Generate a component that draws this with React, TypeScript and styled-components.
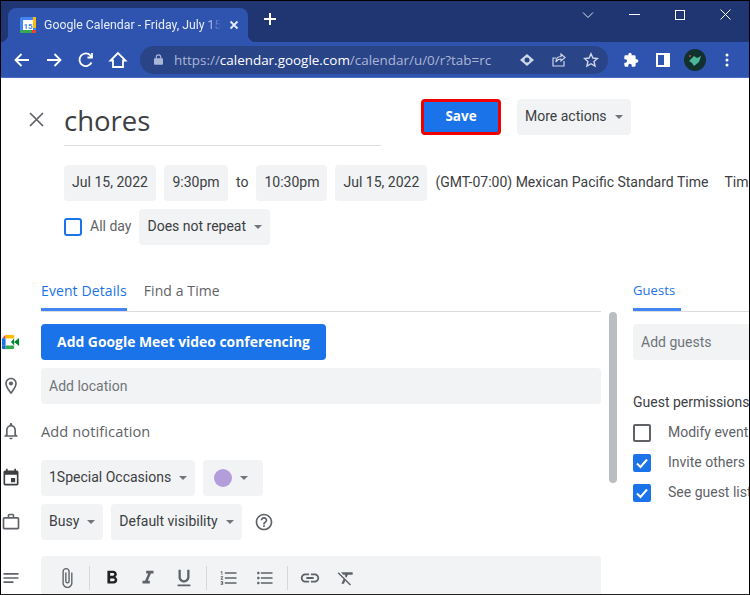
import React from 'react';
import styled, { createGlobalStyle } from 'styled-components';
import {
  MdAttachFile,
  MdEvent,
  MdFormatBold,
  MdFormatClear,
  MdFormatItalic,
  MdFormatListBulleted,
  MdFormatListNumbered,
  MdFormatUnderlined,
  MdHelpOutline,
  MdLink,
  MdNotes,
  MdOutlineLocationOn,
  MdOutlineNotifications,
  MdOutlineWorkOutline,
} from 'react-icons/md';

const GlobalStyle = createGlobalStyle`
  html, body {
    margin: 0;
    padding: 0;
    background: #fff;
  }
`;

const Frame = styled.div`
  width: 750px;
  height: 595px;
  box-sizing: border-box;
  border-top: 1px solid #000;
  border-left: 1px solid #000;
  border-right: 1px solid #000;
  border-bottom: 1px solid #222;
  overflow: hidden;
  display: flex;
  flex-direction: column;
  font-family: Roboto, 'Liberation Sans', sans-serif;
  font-size: 14px;
  color: #3c4043;
  background: #fff;
`;

const TitleBar = styled.div`
  height: 41px;
  flex: none;
  background: #1f3673;
  display: flex;
  align-items: flex-end;
  padding-left: 7px;
`;

const Tab = styled.div`
  width: 240px;
  height: 34px;
  box-sizing: border-box;
  background: #2f54b0;
  border-radius: 8px 8px 0 0;
  display: flex;
  align-items: center;
  padding: 0 9px 0 12px;
  gap: 8px;
  color: #e6ecf8;
  font-size: 12.3px;
  white-space: nowrap;
  position: relative;

  &::before,
  &::after {
    content: '';
    position: absolute;
    bottom: 0;
    width: 8px;
    height: 8px;
  }
  &::before {
    left: -8px;
    background: radial-gradient(circle at 0 0, transparent 8px, #2f54b0 8.5px);
  }
  &::after {
    right: -8px;
    background: radial-gradient(circle at 100% 0, transparent 8px, #2f54b0 8.5px);
  }
`;

const TabTitle = styled.span`
  flex: 1;
  overflow: hidden;
  mask-image: linear-gradient(to right, #000 162px, transparent 177px);
`;

const NewTab = styled.div`
  margin: 0 0 10px 15px;
  width: 16px;
  height: 26px;
  display: flex;
  align-items: center;
`;

const WindowButtons = styled.div`
  margin-left: auto;
  align-self: flex-start;
  display: flex;
  align-items: center;
  height: 27px;
  gap: 35px;
  padding-right: 18px;
`;

const Toolbar = styled.div`
  height: 36px;
  flex: none;
  box-sizing: border-box;
  background: #2f54b0;
  border-bottom: 1px solid #4a6cc0;
  display: flex;
  align-items: center;
  padding-left: 11px;
`;

const NavIcons = styled.div`
  width: 128px;
  display: flex;
  align-items: center;
  gap: 12px;
  flex: none;
`;

const Omnibox = styled.div`
  width: 468px;
  height: 28px;
  flex: none;
  border-radius: 14px;
  background: #2a4488;
  display: flex;
  align-items: center;
  padding: 0 9px 0 14px;
  box-sizing: border-box;
  font-family: 'Open Sans', 'Liberation Sans', sans-serif;
  font-size: 13.45px;
  color: #aab6d6;
`;

const Url = styled.span`
  margin-left: 11px;
  flex: 1;
  white-space: nowrap;
  b {
    font-weight: 400;
    color: #fff;
  }
`;

const OmniIcons = styled.div`
  display: flex;
  gap: 16px;
  align-items: center;
`;

const ExtIcons = styled.div`
  display: flex;
  align-items: center;
  margin-left: 7px;
`;

const ExtSlot = styled.span`
  width: 32px;
  display: flex;
  justify-content: center;
  align-items: center;
`;

const Page = styled.div`
  flex: 1;
  min-height: 0;
  overflow: hidden;
`;

const HeaderRow = styled.div`
  display: flex;
  align-items: flex-start;
  padding: 21px 0 0 28px;
  height: 87px;
  box-sizing: border-box;
`;

const CloseBox = styled.div`
  width: 35px;
  height: 40px;
  display: flex;
  align-items: center;
  flex: none;
`;

const TitleInput = styled.div`
  width: 317px;
  height: 47px;
  flex: none;
  box-sizing: border-box;
  border-bottom: 1px solid #dadce0;
  font-family: 'Open Sans', 'Noto Sans', sans-serif;
  font-size: 27.5px;
  line-height: 44px;
  color: #3c4043;
`;

const SaveButton = styled.div`
  width: 80px;
  height: 36px;
  margin-left: 40px;
  padding-bottom: 2px;
  box-sizing: border-box;
  border: 3px solid #f00000;
  border-radius: 4px;
  background: #1a73e8;
  color: #fff;
  font-weight: 700;
  display: flex;
  align-items: center;
  justify-content: center;
  font-family: 'Open Sans', Roboto, sans-serif;
  font-size: 13.5px;
`;

const Chip = styled.div<{ $w?: number }>`
  height: 36px;
  box-sizing: border-box;
  background: #f1f3f4;
  border-radius: 4px;
  display: flex;
  align-items: center;
  padding: 0 8px 2px;
  white-space: nowrap;
  flex: none;
  color: #3c4043;
  ${p => (p.$w ? `width: ${p.$w}px;` : '')}
`;

const MoreChip = styled(Chip)`
  margin-left: 16px;
`;

const Caret = styled.span`
  width: 0;
  height: 0;
  margin: 2px 0 0 8px;
  border-left: 4.5px solid transparent;
  border-right: 4.5px solid transparent;
  border-top: 4.5px solid #70757a;
  flex: none;
`;

const DateRow = styled.div`
  display: flex;
  align-items: center;
  height: 36px;
  padding-left: 63px;
  gap: 8px;
  white-space: nowrap;
`;

const DateChip = styled(Chip)`
  justify-content: center;
  padding: 0 0 2px;
`;

const RowText = styled.span`
  flex: none;
  margin-bottom: 2px;
`;

const Tim = styled(RowText)`
  margin-left: 8px;
`;

const AllDayRow = styled.div`
  display: flex;
  align-items: center;
  height: 36px;
  margin-top: 8px;
  padding-left: 63px;
`;

const AllDayBox = styled.span`
  width: 18px;
  height: 18px;
  box-sizing: border-box;
  border: 2px solid #1a73e8;
  border-radius: 3px;
  flex: none;
`;

const AllDayText = styled.span`
  margin: 0 8px 2px 8px;
  color: #5f6368;
`;

const Columns = styled.div`
  display: flex;
  margin-top: 32px;
`;

const LeftCol = styled.div`
  width: 608px;
  flex: none;
  position: relative;
`;

const TabsRow = styled.div`
  margin-left: 40px;
  width: 560px;
  height: 34px;
  border-bottom: 1px solid #dadce0;
  display: flex;
  gap: 17px;
  align-items: flex-start;
`;

const TabLabel = styled.div<{ $on?: boolean }>`
  height: 34px;
  line-height: 24px;
  padding-top: 2px;
  box-sizing: border-box;
  font-weight: 500;
  font-family: 'Open Sans', Roboto, sans-serif;
  font-size: 14px;
  letter-spacing: 0.1px;
  color: ${p => (p.$on ? '#1a73e8' : '#5f6368')};
  border-bottom: 3px solid ${p => (p.$on ? '#4285f4' : 'transparent')};
`;

const Scrollbar = styled.div`
  position: absolute;
  left: 608px;
  top: 35px;
  width: 8px;
  height: 171px;
  background: #babdc1;
  border-radius: 4px;
`;

const FieldRow = styled.div<{ $top?: number; $h?: number }>`
  display: flex;
  align-items: center;
  gap: 8px;
  height: ${p => p.$h ?? 36}px;
  margin-top: ${p => p.$top ?? 8}px;
  position: relative;
  padding-left: 40px;
`;

const RowIcon = styled.span`
  position: absolute;
  left: 0;
  top: 50%;
  transform: translateY(-50%);
  width: 20px;
  display: flex;
  justify-content: center;
  color: #5f6368;
`;

const CalendarIcon = styled(RowIcon)`
  color: #3c4043;
`;

const MeetButton = styled.div`
  height: 36px;
  width: 285px;
  padding-bottom: 2px;
  box-sizing: border-box;
  background: #1a73e8;
  color: #fff;
  border-radius: 4px;
  font-weight: 700;
  font-family: 'Open Sans', Roboto, sans-serif;
  font-size: 13.9px;
  display: flex;
  align-items: center;
  justify-content: center;
  white-space: nowrap;
`;

const WideField = styled(Chip)`
  width: 560px;
  padding-bottom: 0;
  color: #70757a;
`;

const AddNote = styled.span`
  color: #5f6368;
  font-weight: 500;
  font-family: 'Open Sans', Roboto, sans-serif;
  font-size: 14.6px;
  letter-spacing: 0.1px;
`;

const ColorDot = styled.span`
  width: 18px;
  height: 18px;
  border-radius: 50%;
  background: #b39ddb;
  margin: 2px 0 0 3px;
  flex: none;
`;

const HelpIcon = styled(MdHelpOutline)`
  margin-left: 4px;
  color: #5f6368;
`;

const EditorBar = styled.div`
  width: 560px;
  height: 44px;
  flex: none;
  background: #f1f3f4;
  border-radius: 4px 4px 0 0;
  display: flex;
  align-items: center;
  padding-left: 8px;
  box-sizing: border-box;
`;

const EditorTool = styled.span<{ $dark?: boolean }>`
  width: 36px;
  display: flex;
  justify-content: center;
  color: ${p => (p.$dark ? '#202124' : '#5f6368')};
`;

const Sep = styled.span`
  width: 1px;
  height: 24px;
  margin: 0 4px;
  background: #d6d8db;
  flex: none;
`;

const RightCol = styled.div`
  flex: 1;
  min-width: 0;
  padding-left: 24px;
  overflow: hidden;
`;

const GuestTab = styled.div`
  height: 34px;
  border-bottom: 1px solid #dadce0;
  width: 200px;
`;

const GuestTabLabel = styled.div`
  width: 48px;
  height: 34px;
  line-height: 24px;
  padding-top: 1px;
  box-sizing: border-box;
  border-bottom: 3px solid #4285f4;
  color: #1a73e8;
  font-weight: 500;
  font-family: 'Open Sans', Roboto, sans-serif;
  font-size: 13px;
  letter-spacing: 0.1px;
`;

const GuestField = styled(Chip)`
  margin-top: 12px;
  padding-bottom: 0;
  width: 200px;
  color: #70757a;
`;

const PermTitle = styled.div`
  margin-top: 32px;
  white-space: nowrap;
  line-height: 20px;
`;

const PermRow = styled.div`
  display: flex;
  align-items: center;
  height: 30px;
  white-space: nowrap;
  color: #5f6368;
  gap: 17px;
`;

const PermLabel = styled.span`
  margin-bottom: 2px;
`;

const PermList = styled.div`
  margin-top: 6px;
`;

const Box = styled.span<{ $on?: boolean }>`
  width: 18px;
  height: 18px;
  box-sizing: border-box;
  border-radius: 2px;
  flex: none;
  display: flex;
  align-items: center;
  justify-content: center;
  border: ${p => (p.$on ? 'none' : '2px solid #5f6368')};
  background: ${p => (p.$on ? '#1a73e8' : '#fff')};
`;

const Check = () => (
  <svg width="14" height="14" viewBox="0 0 14 14" fill="none" stroke="#fff" strokeWidth="2">
    <path d="M2 7.5 5.5 11 12 3.5" />
  </svg>
);

const White = ({ children }: { children: React.ReactNode }) => (
  <svg width="20" height="20" viewBox="0 0 20 20" fill="none" stroke="#fff" strokeWidth="1.8">
    {children}
  </svg>
);

export default function App() {
  return (
    <>
      <GlobalStyle />
      <Frame>
        <TitleBar>
          <Tab>
            <svg width="16" height="16" viewBox="0 0 16 16">
              <rect width="16" height="16" rx="1.5" fill="#4285f4" />
              <rect x="3" y="3" width="10" height="10" fill="#fff" />
              <rect x="13" width="3" height="11" fill="#fbbc04" />
              <rect y="13" width="12" height="3" fill="#34a853" />
              <rect x="12" y="13" width="4" height="3" fill="#ea4335" />
              <text x="8" y="11.5" fontSize="8" fontWeight="700" textAnchor="middle" fill="#4285f4" fontFamily="Roboto">15</text>
            </svg>
            <TabTitle>Google Calendar - Friday, July 15, 2022</TabTitle>
            <svg width="10" height="10" viewBox="0 0 10 10" stroke="#e6ecf8" strokeWidth="1.8">
              <path d="M1.5 1.5 8.5 8.5M8.5 1.5 1.5 8.5" />
            </svg>
          </Tab>
          <NewTab>
            <svg width="14" height="14" viewBox="0 0 14 14" stroke="#fff" strokeWidth="2">
              <path d="M7 1v12M1 7h12" />
            </svg>
          </NewTab>
          <WindowButtons>
            <svg width="12" height="8" viewBox="0 0 12 8" fill="none" stroke="#dfe5f2" strokeWidth="1">
              <path d="M1 1.5 6 6.5 11 1.5" />
            </svg>
            <svg width="11" height="2" viewBox="0 0 11 2"><rect width="11" height="1" fill="#fff" /></svg>
            <svg width="10" height="10" viewBox="0 0 10 10" fill="none" stroke="#fff"><rect x=".5" y=".5" width="9" height="9" /></svg>
            <svg width="11" height="11" viewBox="0 0 11 11" stroke="#fff"><path d="M.5.5 10.500 10.500M10.500.5.5 10.500" /></svg>
          </WindowButtons>
        </TitleBar>
        <Toolbar>
          <NavIcons>
            <White><path d="M17 10H4M9.5 4 3.5 10l6 6" /></White>
            <White><path d="M3 10h13M10.5 4l6 6-6 6" /></White>
            <White><path d="M15.5 12.5A6.3 6.3 0 1 1 14.500 5.500L16 7M16 3v4.500h-4.500" /></White>
            <White><path d="M10 3 2.500 10.500H5V17h10v-6.500h2.500z" /></White>
          </NavIcons>
          <Omnibox>
            <svg width="9" height="11" viewBox="0 0 11 13">
              <rect y="5" width="11" height="8" rx="1" fill="#aab6d6" />
              <path d="M2.800 5.500V3.500a2.700 2.700 0 0 1 5.400 0v2" fill="none" stroke="#aab6d6" strokeWidth="1.400" />
            </svg>
            <Url>https://<b>calendar.google.com</b>/calendar/u/0/r?tab=rc</Url>
            <OmniIcons>
              <svg width="16" height="16" viewBox="0 0 16 16">
                <path d="M8 2 15 8 8 14 1 8z" fill="#cfd6e8" />
                <circle cx="8" cy="8" r="2.500" fill="#2a4488" />
              </svg>
              <svg width="16" height="16" viewBox="0 0 16 16" fill="none" stroke="#cfd6e8" strokeWidth="1.200">
                <path d="M13 9v5H2V6h3M10 2l4 3.500L10 9V7C7.500 7 6 8 5 10c0-3.500 2-5.500 5-5.500z" />
              </svg>
              <svg width="16" height="16" viewBox="0 0 16 16" fill="none" stroke="#cfd6e8" strokeWidth="1.400">
                <path d="M8 1.800 9.900 6l4.500.5-3.400 3 1 4.500L8 11.700 3.900 14l1-4.500-3.400-3L6.100 6z" />
              </svg>
            </OmniIcons>
          </Omnibox>
          <ExtIcons>
            <ExtSlot>
              <svg width="16" height="16" viewBox="0 0 24 24" fill="#fff">
                <path d="M20.500 11H19V7a2 2 0 0 0-2-2h-4V3.500a2.500 2.500 0 0 0-5 0V5H4a2 2 0 0 0-2 2v3.800h1.500a2.700 2.700 0 0 1 0 5.400H2V20a2 2 0 0 0 2 2h3.800v-1.500a2.700 2.700 0 0 1 5.400 0V22H17a2 2 0 0 0 2-2v-4h1.500a2.500 2.500 0 0 0 0-5z" />
              </svg>
            </ExtSlot>
            <ExtSlot>
              <svg width="14" height="14" viewBox="0 0 14 14">
                <rect width="14" height="14" fill="#fff" />
                <rect x="2" y="2" width="6" height="10" fill="#2f54b0" />
              </svg>
            </ExtSlot>
            <ExtSlot>
              <svg width="22" height="22" viewBox="0 0 22 22">
                <circle cx="11" cy="11" r="11" fill="#12312e" />
                <path d="M5 12l5-5 3 2 4-2-2 6-5 4-2-3z" fill="#4cb69a" />
                <circle cx="6" cy="7" r="1" fill="#c0503c" />
              </svg>
            </ExtSlot>
            <ExtSlot>
              <svg width="4" height="14" viewBox="0 0 4 14" fill="#fff">
                <circle cx="2" cy="2" r="1.500" />
                <circle cx="2" cy="7" r="1.500" />
                <circle cx="2" cy="12" r="1.500" />
              </svg>
            </ExtSlot>
          </ExtIcons>
        </Toolbar>
        <Page>
          <HeaderRow>
            <CloseBox>
              <svg width="15" height="15" viewBox="0 0 15 15" stroke="#5f6368" strokeWidth="1.700">
                <path d="M1 1 14 14M14 1 1 14" />
              </svg>
            </CloseBox>
            <TitleInput>chores</TitleInput>
            <SaveButton>Save</SaveButton>
            <MoreChip>More actions<Caret /></MoreChip>
          </HeaderRow>
          <DateRow>
            <DateChip $w={92}>Jul 15, 2022</DateChip>
            <DateChip $w={64}>9:30pm</DateChip>
            <RowText>to</RowText>
            <DateChip $w={71}>10:30pm</DateChip>
            <DateChip $w={92}>Jul 15, 2022</DateChip>
            <RowText>(GMT-07:00) Mexican Pacific Standard Time</RowText>
            <Tim>Time zone</Tim>
          </DateRow>
          <AllDayRow>
            <AllDayBox />
            <AllDayText>All day</AllDayText>
            <Chip>Does not repeat<Caret /></Chip>
          </AllDayRow>
          <Columns>
            <LeftCol>
              <TabsRow>
                <TabLabel $on>Event Details</TabLabel>
                <TabLabel>Find a Time</TabLabel>
              </TabsRow>
              <Scrollbar />
              <FieldRow $top={12}>
                <RowIcon>
                  <svg width="18" height="15" viewBox="0 0 20 16">
                    <path d="M0 4 4 0v4z" fill="#ea4335" />
                    <rect y="4" width="4" height="8" fill="#1a73e8" />
                    <path d="M0 12h4v4H1.500A1.500 1.500 0 0 1 0 14.500z" fill="#1967d2" />
                    <path d="M4 0h8a1.500 1.500 0 0 1 1.500 1.500V4H4z" fill="#fbbc04" />
                    <path d="M4 12h9.500v2.500A1.500 1.500 0 0 1 12 16H4z" fill="#34a853" />
                    <path d="M13.500 8 19 3.500v9L13.500 8zM10 8l3.500-4v8z" fill="#00832d" />
                  </svg>
                </RowIcon>
                <MeetButton>Add Google Meet video conferencing</MeetButton>
              </FieldRow>
              <FieldRow>
                <RowIcon><MdOutlineLocationOn size={22} /></RowIcon>
                <WideField>Add location</WideField>
              </FieldRow>
              <FieldRow $top={9}>
                <RowIcon><MdOutlineNotifications size={22} /></RowIcon>
                <AddNote>Add notification</AddNote>
              </FieldRow>
              <FieldRow $top={11}>
                <CalendarIcon><MdEvent size={21} /></CalendarIcon>
                <Chip>1Special Occasions<Caret /></Chip>
                <Chip $w={60}><ColorDot /><Caret /></Chip>
              </FieldRow>
              <FieldRow>
                <RowIcon><MdOutlineWorkOutline size={20} /></RowIcon>
                <Chip>Busy<Caret /></Chip>
                <Chip>Default visibility<Caret /></Chip>
                <HelpIcon size={20} />
              </FieldRow>
              <FieldRow $h={44} $top={16}>
                <RowIcon><MdNotes size={20} /></RowIcon>
                <EditorBar>
                  <EditorTool><MdAttachFile size={22} /></EditorTool>
                  <Sep />
                  <EditorTool $dark><MdFormatBold size={22} /></EditorTool>
                  <EditorTool><MdFormatItalic size={22} /></EditorTool>
                  <EditorTool><MdFormatUnderlined size={22} /></EditorTool>
                  <Sep />
                  <EditorTool><MdFormatListNumbered size={20} /></EditorTool>
                  <EditorTool><MdFormatListBulleted size={20} /></EditorTool>
                  <Sep />
                  <EditorTool><MdLink size={22} /></EditorTool>
                  <EditorTool><MdFormatClear size={20} /></EditorTool>
                </EditorBar>
              </FieldRow>
            </LeftCol>
            <RightCol>
              <GuestTab><GuestTabLabel>Guests</GuestTabLabel></GuestTab>
              <GuestField>Add guests</GuestField>
              <PermTitle>Guest permissions</PermTitle>
              <PermList>
                <PermRow><Box /><PermLabel>Modify event</PermLabel></PermRow>
                <PermRow><Box $on><Check /></Box><PermLabel>Invite others</PermLabel></PermRow>
                <PermRow><Box $on><Check /></Box><PermLabel>See guest list</PermLabel></PermRow>
              </PermList>
            </RightCol>
          </Columns>
        </Page>
      </Frame>
    </>
  );
}
